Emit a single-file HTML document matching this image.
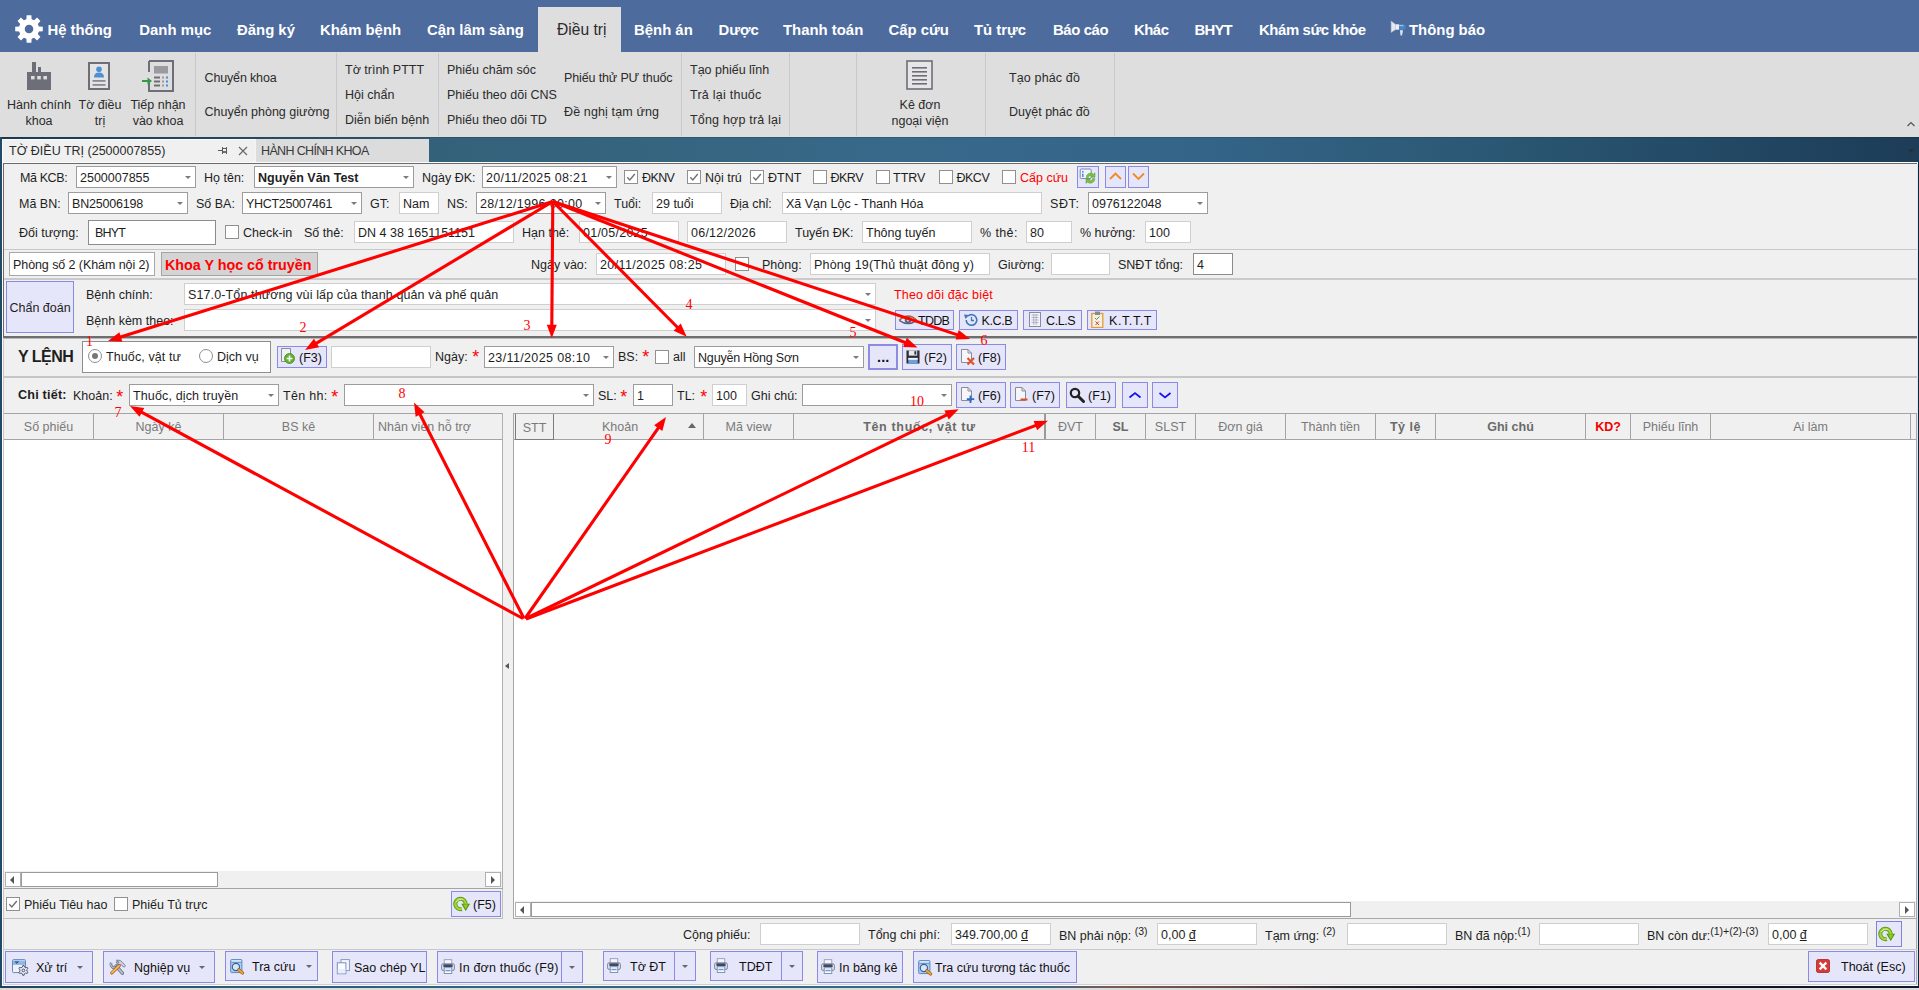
<!DOCTYPE html>
<html><head><meta charset="utf-8"><title>UI</title>
<style>
html,body{margin:0;padding:0;}
body{width:1919px;height:990px;overflow:hidden;position:relative;background:#f0f0f0;font-family:"Liberation Sans",sans-serif;}
.t{position:absolute;white-space:pre;line-height:20px;height:20px;}
.b{position:absolute;box-sizing:border-box;}
.s{font-size:10.5px;position:relative;top:-4.5px;}
</style></head><body>
<div class="b" style="left:0px;top:0px;width:1919px;height:52px;background:#4d6b9d;"></div>
<div class="b" style="left:0px;top:52px;width:1919px;height:85px;background:#dedede;"></div>
<div class="b" style="left:0px;top:137px;width:1919px;height:25px;background:linear-gradient(90deg,#1c3f59 0%,#2f5b74 20%,#34617a 22.4%,#366682 39%,#38698b 47%,#346488 62.5%,#2c5a76 75.5%,#234a66 88.6%,#1d3c57 100%);"></div>
<div class="b" style="left:0px;top:137px;width:1919px;height:1px;background:rgba(10,25,40,.18);"></div>
<div class="b" style="left:0px;top:138px;width:430px;height:1px;background:rgba(10,25,40,.1);"></div>
<div class="b" style="left:0px;top:137px;width:2px;height:853px;background:#214a68;"></div>
<div class="b" style="left:1918px;top:162px;width:1px;height:826px;background:#10263c;"></div>
<div class="b" style="left:0px;top:986px;width:1919px;height:2px;background:linear-gradient(90deg,#1f4260 0%,#28587a 10%,#2d6584 25%,#34698a 54%,#7a5a52 58%,#6a4a48 64%,#2a2230 70%,#0a0f1c 78%,#0e1a2c 100%);"></div>
<div class="b" style="left:0px;top:988px;width:1919px;height:2px;background:#dcdcdc;"></div>
<div class="b" style="left:538px;top:7px;width:83px;height:45px;background:#dedede;"></div>
<span class="t" style="left:47.4px;top:19.5px;font-size:14.9px;color:#fff;font-weight:700;">Hệ thống</span>
<span class="t" style="left:139.3px;top:19.5px;font-size:14.9px;color:#fff;font-weight:700;">Danh mục</span>
<span class="t" style="left:237px;top:19.5px;font-size:14.9px;color:#fff;font-weight:700;">Đăng ký</span>
<span class="t" style="left:320px;top:19.5px;font-size:14.9px;color:#fff;font-weight:700;">Khám bệnh</span>
<span class="t" style="left:427px;top:19.5px;font-size:14.9px;color:#fff;font-weight:700;">Cận lâm sàng</span>
<span class="t" style="left:634px;top:19.5px;font-size:14.9px;color:#fff;font-weight:700;">Bệnh án</span>
<span class="t" style="left:718.5px;top:19.5px;font-size:14.9px;color:#fff;font-weight:700;">Dược</span>
<span class="t" style="left:783px;top:19.5px;font-size:14.9px;color:#fff;font-weight:700;">Thanh toán</span>
<span class="t" style="left:888.5px;top:19.5px;font-size:14.9px;color:#fff;font-weight:700;">Cấp cứu</span>
<span class="t" style="left:974px;top:19.5px;font-size:14.9px;color:#fff;font-weight:700;">Tủ trực</span>
<span class="t" style="left:1053px;top:19.5px;font-size:14.9px;color:#fff;font-weight:700;letter-spacing:-0.4px;">Báo cáo</span>
<span class="t" style="left:1134px;top:19.5px;font-size:14.9px;color:#fff;font-weight:700;letter-spacing:-0.5px;">Khác</span>
<span class="t" style="left:1194.5px;top:19.5px;font-size:14.9px;color:#fff;font-weight:700;letter-spacing:-0.8px;">BHYT</span>
<span class="t" style="left:1259px;top:19.5px;font-size:14.9px;color:#fff;font-weight:700;letter-spacing:-0.4px;">Khám sức khỏe</span>
<span class="t" style="left:1409px;top:19.5px;font-size:14.9px;color:#fff;font-weight:700;">Thông báo</span>
<span class="t" style="left:557px;top:19.5px;font-size:15.6px;color:#2b2b2b;">Điều trị</span>
<svg class="b" style="left:13px;top:13px" width="32" height="32" viewBox="0 0 32 32"><path d="M25.86 13.38 L29.80 13.63 L29.80 18.37 L25.86 18.62 L24.82 21.12 L27.43 24.08 L24.08 27.43 L21.12 24.82 L18.62 25.86 L18.37 29.80 L13.63 29.80 L13.38 25.86 L10.88 24.82 L7.92 27.43 L4.57 24.08 L7.18 21.12 L6.14 18.62 L2.20 18.37 L2.20 13.63 L6.14 13.38 L7.18 10.88 L4.57 7.92 L7.92 4.57 L10.88 7.18 L13.38 6.14 L13.63 2.20 L18.37 2.20 L18.62 6.14 L21.12 7.18 L24.08 4.57 L27.43 7.92 L24.82 10.88 Z M20.30 16.00 A4.3 4.3 0 1 0 11.70 16.00 A4.3 4.3 0 1 0 20.30 16.00 Z" fill="#fff" fill-rule="evenodd"/></svg>
<svg class="b" style="left:1390px;top:20px" width="17" height="17" viewBox="0 0 17 17"><polygon points="1.1,1.1 5.6,4.4 5.6,9.6 1.1,12.6" fill="#e6e8f0" stroke="#aab4c8" stroke-width=".5"/><rect x="5.5" y="4.3" width="3.6" height="5.4" fill="#eceef4"/><path d="M9 4.2 H13 Q15.7 4.2 15.7 7 Q15.7 9.8 13 9.8 H9 Z" fill="#4a86c8"/><path d="M9.2 5.6 H13.4" stroke="#a8ccee" stroke-width="1"/><polygon points="9.9,10.2 13,10.2 12,15.5 10.6,15.5" fill="#e0e4ee"/></svg>
<div class="b" style="left:195px;top:53px;width:1px;height:83px;background:#c8c8c8;"></div>
<div class="b" style="left:336px;top:53px;width:1px;height:83px;background:#c8c8c8;"></div>
<div class="b" style="left:438px;top:53px;width:1px;height:83px;background:#c8c8c8;"></div>
<div class="b" style="left:681px;top:53px;width:1px;height:83px;background:#c8c8c8;"></div>
<div class="b" style="left:789px;top:53px;width:1px;height:83px;background:#c8c8c8;"></div>
<div class="b" style="left:856px;top:53px;width:1px;height:83px;background:#c8c8c8;"></div>
<div class="b" style="left:985px;top:53px;width:1px;height:83px;background:#c8c8c8;"></div>
<div class="b" style="left:1114px;top:53px;width:1px;height:83px;background:#c8c8c8;"></div>
<span class="t" style="left:-21px;top:94.5px;font-size:12.5px;color:#2b2b2b;width:120px;text-align:center;">Hành chính</span>
<span class="t" style="left:-21px;top:110.5px;font-size:12.5px;color:#2b2b2b;width:120px;text-align:center;">khoa</span>
<span class="t" style="left:40px;top:94.5px;font-size:12.5px;color:#2b2b2b;width:120px;text-align:center;">Tờ điều</span>
<span class="t" style="left:40px;top:110.5px;font-size:12.5px;color:#2b2b2b;width:120px;text-align:center;">trị</span>
<span class="t" style="left:98px;top:94.5px;font-size:12.5px;color:#2b2b2b;width:120px;text-align:center;">Tiếp nhận</span>
<span class="t" style="left:98px;top:110.5px;font-size:12.5px;color:#2b2b2b;width:120px;text-align:center;">vào khoa</span>
<span class="t" style="left:860px;top:94.5px;font-size:12.5px;color:#2b2b2b;width:120px;text-align:center;">Kê đơn</span>
<span class="t" style="left:860px;top:110.5px;font-size:12.5px;color:#2b2b2b;width:120px;text-align:center;">ngoại viện</span>
<span class="t" style="left:204.5px;top:67.5px;font-size:12.5px;color:#2b2b2b;letter-spacing:-0.15px;">Chuyển khoa</span>
<span class="t" style="left:204.5px;top:101.5px;font-size:12.5px;color:#2b2b2b;">Chuyển phòng giường</span>
<span class="t" style="left:345px;top:59.5px;font-size:12.5px;color:#2b2b2b;">Tờ trình PTTT</span>
<span class="t" style="left:345px;top:84.5px;font-size:12.5px;color:#2b2b2b;">Hội chẩn</span>
<span class="t" style="left:345px;top:109.5px;font-size:12.5px;color:#2b2b2b;">Diễn biến bệnh</span>
<span class="t" style="left:447px;top:59.5px;font-size:12.5px;color:#2b2b2b;">Phiếu chăm sóc</span>
<span class="t" style="left:447px;top:84.5px;font-size:12.5px;color:#2b2b2b;">Phiếu theo dõi CNS</span>
<span class="t" style="left:447px;top:109.5px;font-size:12.5px;color:#2b2b2b;">Phiếu theo dõi TD</span>
<span class="t" style="left:564px;top:67.5px;font-size:12.5px;color:#2b2b2b;letter-spacing:-0.13px;">Phiếu thử PƯ thuốc</span>
<span class="t" style="left:564px;top:101.5px;font-size:12.5px;color:#2b2b2b;letter-spacing:0.13px;">Đề nghị tạm ứng</span>
<span class="t" style="left:690px;top:59.5px;font-size:12.5px;color:#2b2b2b;">Tạo phiếu lĩnh</span>
<span class="t" style="left:690px;top:84.5px;font-size:12.5px;color:#2b2b2b;letter-spacing:0.25px;">Trả lại thuốc</span>
<span class="t" style="left:690px;top:109.5px;font-size:12.5px;color:#2b2b2b;letter-spacing:0.19px;">Tổng hợp trả lại</span>
<span class="t" style="left:1009px;top:67.5px;font-size:12.5px;color:#2b2b2b;letter-spacing:0.14px;">Tạo phác đồ</span>
<span class="t" style="left:1009px;top:101.5px;font-size:12.5px;color:#2b2b2b;">Duyệt phác đồ</span>
<svg class="b" style="left:27px;top:61px" width="25" height="30" viewBox="0 0 25 30"><path d="M0 11 H5 V1 H9 V11 H11 V6 H14 V11 H24 V29 H0 Z" fill="#6e6e78"/><rect x="4" y="15" width="3.6" height="3.4" fill="#dedede"/><rect x="10.2" y="15" width="3.6" height="3.4" fill="#dedede"/><rect x="16.4" y="15" width="3.6" height="3.4" fill="#dedede"/></svg>
<svg class="b" style="left:88px;top:62px" width="22" height="28" viewBox="0 0 22 28"><rect x="1" y="1" width="20" height="26" fill="#e4e4e4" stroke="#6e6e78" stroke-width="2"/><circle cx="11" cy="7.2" r="2.8" fill="#4f8fd6"/><path d="M6 15.5 Q6 10.5 11 10.5 Q16 10.5 16 15.5 Z" fill="#4f8fd6"/><rect x="4.5" y="18" width="13" height="1.8" fill="#8a8a92"/><rect x="4.5" y="22" width="13" height="1.8" fill="#8a8a92"/></svg>
<svg class="b" style="left:142px;top:60px" width="32" height="32" viewBox="0 0 32 32"><path d="M7 1 H31 V31 H7 V20 M7 12 V1" fill="none" stroke="#6e6e78" stroke-width="2"/><rect x="12" y="6" width="14" height="7.5" fill="#9a9aa0"/><rect x="12" y="16.5" width="6" height="2" fill="#6e6e78"/><rect x="12" y="20.5" width="6" height="2" fill="#6e6e78"/><rect x="12" y="24.5" width="6" height="2" fill="#6e6e78"/><rect x="20" y="16.5" width="2" height="2" fill="#9a9aa0"/><rect x="20" y="20.5" width="2" height="2" fill="#9a9aa0"/><rect x="20" y="24.5" width="2" height="2" fill="#9a9aa0"/><rect x="24" y="16.5" width="2" height="2" fill="#3f8fe0"/><rect x="24" y="20.5" width="2" height="2" fill="#3f8fe0"/><rect x="24" y="24.5" width="2" height="2" fill="#3f8fe0"/><path d="M0 20 H5.5 V17.5 L10 21 L5.5 24.5 V22 H0 Z" fill="#2e9b4a"/></svg>
<svg class="b" style="left:906px;top:60px" width="27" height="30" viewBox="0 0 27 30"><rect x="1" y="1" width="25" height="28" fill="#e6e6e6" stroke="#6e6e78" stroke-width="1.6"/><rect x="6" y="7" width="15" height="1.6" fill="#6e6e78"/><rect x="6" y="11" width="15" height="1.6" fill="#6e6e78"/><rect x="6" y="15" width="15" height="1.6" fill="#6e6e78"/><rect x="6" y="19" width="15" height="1.6" fill="#6e6e78"/><rect x="6" y="23" width="15" height="1.6" fill="#6e6e78"/></svg>
<svg class="b" style="left:1906px;top:120px" width="10" height="8" viewBox="0 0 10 8"><path d="M1.5 6 L5 2.5 L8.5 6" fill="none" stroke="#555" stroke-width="1.2"/></svg>
<div class="b" style="left:2px;top:139px;width:253px;height:24px;background:#f0f0f0;border-top:1px solid #fafafa;border-left:1px solid #fafafa;"></div>
<div class="b" style="left:255px;top:139px;width:174px;height:23px;background:#dcdcdc;border-left:1px solid #f4f4f4;"></div>
<span class="t" style="left:9px;top:141px;font-size:12.5px;color:#2b2b2b;">TỜ ĐIỀU TRỊ (2500007855)</span>
<span class="t" style="left:261px;top:141px;font-size:12.5px;color:#3a3a3a;letter-spacing:-0.65px;">HÀNH CHÍNH KHOA</span>
<svg class="b" style="left:217px;top:145px" width="12" height="12" viewBox="0 0 12 12"><path d="M1 5.5 H5.5 M5.5 2 V9 M5.5 3.5 H9.5 M9.5 2 V9" fill="none" stroke="#5a5a5a" stroke-width="1"/><path d="M5.5 7 H9.5" stroke="#5a5a5a" stroke-width="1.7"/></svg>
<svg class="b" style="left:237px;top:145px" width="12" height="12" viewBox="0 0 12 12"><path d="M2 2 L10 10 M10 2 L2 10" fill="none" stroke="#666" stroke-width="1.1"/></svg>
<div class="b" style="left:1908px;top:149px;width:0;height:0;border-left:3.5px solid transparent;border-right:3.5px solid transparent;border-top:4px solid #2a2f36;"></div>
<div class="b" style="left:2px;top:162px;width:1916px;height:824px;background:#f0f0f0;"></div>
<div class="b" style="left:2px;top:984px;width:1916px;height:1px;background:#d0d0d0;"></div>
<div class="b" style="left:2px;top:985px;width:1916px;height:1px;background:#fafafa;"></div>
<div class="b" style="left:1917px;top:164px;width:1px;height:821px;background:#e4e4e4;"></div>
<div class="b" style="left:2px;top:162px;width:1916px;height:1px;background:#fcfcfc;"></div>
<div class="b" style="left:3px;top:163px;width:1914px;height:1px;background:#6a6a6a;"></div>
<div class="b" style="left:3px;top:163px;width:1px;height:175px;background:#6a6a6a;"></div>
<div class="b" style="left:3px;top:338px;width:1px;height:646px;background:#c8c8c8;"></div>
<div class="b" style="left:2px;top:163px;width:1px;height:822px;background:#fcfcfc;"></div>
<span class="t" style="left:20px;top:167.6px;font-size:12.5px;color:#1e1e1e;letter-spacing:-0.4px;">Mã KCB:</span>
<div class="b" style="left:76px;top:166px;width:120px;height:22px;background:#fff;border:1px solid #9c9c9c;"></div>
<span class="t" style="left:80px;top:167.5px;font-size:12.5px;color:#1e1e1e;">2500007855</span>
<div class="b" style="left:184.5px;top:175.8px;width:0;height:0;border-left:3.5px solid transparent;border-right:3.5px solid transparent;border-top:3.6px solid #7a7a7a;"></div>
<span class="t" style="left:204px;top:167.6px;font-size:12.5px;color:#1e1e1e;">Họ tên:</span>
<div class="b" style="left:254px;top:166px;width:160px;height:22px;background:#fff;border:1px solid #9c9c9c;"></div>
<span class="t" style="left:258px;top:167.5px;font-size:12.5px;color:#1e1e1e;font-weight:700;">Nguyễn Văn Test</span>
<div class="b" style="left:402.5px;top:175.8px;width:0;height:0;border-left:3.5px solid transparent;border-right:3.5px solid transparent;border-top:3.6px solid #7a7a7a;"></div>
<span class="t" style="left:422px;top:167.6px;font-size:12.5px;color:#1e1e1e;">Ngày ĐK:</span>
<div class="b" style="left:482px;top:166px;width:135px;height:22px;background:#fff;border:1px solid #9c9c9c;"></div>
<span class="t" style="left:486px;top:167.5px;font-size:12.5px;color:#1e1e1e;letter-spacing:0.33px;">20/11/2025 08:21</span>
<div class="b" style="left:605.5px;top:175.8px;width:0;height:0;border-left:3.5px solid transparent;border-right:3.5px solid transparent;border-top:3.6px solid #7a7a7a;"></div>
<div class="b" style="left:624px;top:170px;width:14px;height:14px;background:#fff;border:1px solid #909090;"></div>
<svg class="b" style="left:624px;top:170px" width="14" height="14" viewBox="0 0 14 14"><path d="M3.3 7.3 L5.8 10 L10.8 4" fill="none" stroke="#707070" stroke-width="1.4"/></svg>
<span class="t" style="left:642px;top:167.6px;font-size:12.5px;color:#1e1e1e;letter-spacing:-0.6px;">ĐKNV</span>
<div class="b" style="left:687px;top:170px;width:14px;height:14px;background:#fff;border:1px solid #909090;"></div>
<svg class="b" style="left:687px;top:170px" width="14" height="14" viewBox="0 0 14 14"><path d="M3.3 7.3 L5.8 10 L10.8 4" fill="none" stroke="#707070" stroke-width="1.4"/></svg>
<span class="t" style="left:705px;top:167.6px;font-size:12.5px;color:#1e1e1e;">Nội trú</span>
<div class="b" style="left:750px;top:170px;width:14px;height:14px;background:#fff;border:1px solid #909090;"></div>
<svg class="b" style="left:750px;top:170px" width="14" height="14" viewBox="0 0 14 14"><path d="M3.3 7.3 L5.8 10 L10.8 4" fill="none" stroke="#707070" stroke-width="1.4"/></svg>
<span class="t" style="left:768px;top:167.6px;font-size:12.5px;color:#1e1e1e;">ĐTNT</span>
<div class="b" style="left:813px;top:170px;width:14px;height:14px;background:#fff;border:1px solid #909090;"></div>
<span class="t" style="left:830.5px;top:167.6px;font-size:12.5px;color:#1e1e1e;letter-spacing:-0.5px;">ĐKRV</span>
<div class="b" style="left:876px;top:170px;width:14px;height:14px;background:#fff;border:1px solid #909090;"></div>
<span class="t" style="left:893px;top:167.6px;font-size:12.5px;color:#1e1e1e;">TTRV</span>
<div class="b" style="left:939px;top:170px;width:14px;height:14px;background:#fff;border:1px solid #909090;"></div>
<span class="t" style="left:956.5px;top:167.6px;font-size:12.5px;color:#1e1e1e;letter-spacing:-0.5px;">ĐKCV</span>
<div class="b" style="left:1002px;top:170px;width:14px;height:14px;background:#fff;border:1px solid #909090;"></div>
<span class="t" style="left:1020px;top:167.6px;font-size:12.5px;color:#ff0000;">Cấp cứu</span>
<div class="b" style="left:1077px;top:166px;width:22px;height:22px;background:#e6e6fa;border:1px solid #8a8ae6;"></div>
<div class="b" style="left:1105px;top:166px;width:21px;height:22px;background:#e6e6fa;border:1px solid #8a8ae6;"></div>
<div class="b" style="left:1128px;top:166px;width:21px;height:22px;background:#e6e6fa;border:1px solid #8a8ae6;"></div>
<svg class="b" style="left:1079px;top:168px" width="19" height="18" viewBox="0 0 19 18"><rect x="1.2" y="1" width="11" height="9.5" rx="1" fill="#f2f5fb" stroke="#7a88b4" stroke-width="1"/><rect x="3" y="3" width="1.6" height="1.6" fill="#4a90e0"/><rect x="3" y="5.6" width="1.6" height="3.4" fill="#4a90e0"/><path d="M7.2 9.6 A4.4 4.4 0 0 1 14.6 6.2 L16 4.8 V9.2 H11.6 L12.9 7.9 A2.2 2.2 0 0 0 9.4 9.6 Z" fill="#7cc242" stroke="#4e9a28" stroke-width=".5"/><path d="M15.8 10.6 A4.4 4.4 0 0 1 8.4 14 L7 15.4 V11 H11.4 L10.1 12.3 A2.2 2.2 0 0 0 13.6 10.6 Z" fill="#7cc242" stroke="#4e9a28" stroke-width=".5"/></svg>
<svg class="b" style="left:1108px;top:170px" width="15" height="12" viewBox="0 0 15 12"><path d="M2 9 L7.5 3.5 L13 9" fill="none" stroke="#f08a24" stroke-width="1.8"/></svg>
<svg class="b" style="left:1131px;top:170px" width="15" height="12" viewBox="0 0 15 12"><path d="M2 3.5 L7.5 9 L13 3.5" fill="none" stroke="#f08a24" stroke-width="1.8"/></svg>
<span class="t" style="left:19px;top:193.6px;font-size:12.5px;color:#1e1e1e;">Mã BN:</span>
<div class="b" style="left:68px;top:192px;width:120px;height:22px;background:#fff;border:1px solid #9c9c9c;"></div>
<span class="t" style="left:72px;top:193.5px;font-size:12.5px;color:#1e1e1e;letter-spacing:-0.2px;">BN25006198</span>
<div class="b" style="left:176.5px;top:201.8px;width:0;height:0;border-left:3.5px solid transparent;border-right:3.5px solid transparent;border-top:3.6px solid #7a7a7a;"></div>
<span class="t" style="left:196px;top:193.6px;font-size:12.5px;color:#1e1e1e;">Số BA:</span>
<div class="b" style="left:242px;top:192px;width:120px;height:22px;background:#fff;border:1px solid #9c9c9c;"></div>
<span class="t" style="left:246px;top:193.5px;font-size:12.5px;color:#1e1e1e;letter-spacing:-0.3px;">YHCT25007461</span>
<div class="b" style="left:350.5px;top:201.8px;width:0;height:0;border-left:3.5px solid transparent;border-right:3.5px solid transparent;border-top:3.6px solid #7a7a7a;"></div>
<span class="t" style="left:370px;top:193.6px;font-size:12.5px;color:#1e1e1e;">GT:</span>
<div class="b" style="left:399px;top:192px;width:40px;height:22px;background:#fff;border:1px solid #cfcfcf;"></div>
<span class="t" style="left:403px;top:193.5px;font-size:12.5px;color:#1e1e1e;">Nam</span>
<span class="t" style="left:447px;top:193.6px;font-size:12.5px;color:#1e1e1e;">NS:</span>
<div class="b" style="left:476px;top:192px;width:130px;height:22px;background:#fff;border:1px solid #9c9c9c;"></div>
<span class="t" style="left:480px;top:193.5px;font-size:12.5px;color:#1e1e1e;letter-spacing:0.33px;">28/12/1996 00:00</span>
<div class="b" style="left:594.5px;top:201.8px;width:0;height:0;border-left:3.5px solid transparent;border-right:3.5px solid transparent;border-top:3.6px solid #7a7a7a;"></div>
<span class="t" style="left:614px;top:193.6px;font-size:12.5px;color:#1e1e1e;">Tuổi:</span>
<div class="b" style="left:652px;top:192px;width:70px;height:22px;background:#fff;border:1px solid #cfcfcf;"></div>
<span class="t" style="left:656px;top:193.5px;font-size:12.5px;color:#1e1e1e;">29 tuổi</span>
<span class="t" style="left:730px;top:193.6px;font-size:12.5px;color:#1e1e1e;">Địa chỉ:</span>
<div class="b" style="left:782px;top:192px;width:260px;height:22px;background:#fff;border:1px solid #cfcfcf;"></div>
<span class="t" style="left:786px;top:193.5px;font-size:12.5px;color:#1e1e1e;">Xã Vạn Lộc - Thanh Hóa</span>
<span class="t" style="left:1050px;top:193.6px;font-size:12.5px;color:#1e1e1e;letter-spacing:0.6px;">SĐT:</span>
<div class="b" style="left:1088px;top:192px;width:120px;height:22px;background:#fff;border:1px solid #9c9c9c;"></div>
<span class="t" style="left:1092px;top:193.5px;font-size:12.5px;color:#1e1e1e;">0976122048</span>
<div class="b" style="left:1196.5px;top:201.8px;width:0;height:0;border-left:3.5px solid transparent;border-right:3.5px solid transparent;border-top:3.6px solid #7a7a7a;"></div>
<span class="t" style="left:19px;top:222.6px;font-size:12.5px;color:#1e1e1e;">Đối tượng:</span>
<div class="b" style="left:88px;top:220px;width:128px;height:25px;background:#fff;border:1px solid #8c8c8c;"></div>
<span class="t" style="left:95px;top:223.0px;font-size:12.5px;color:#1e1e1e;letter-spacing:-0.8px;">BHYT</span>
<div class="b" style="left:225px;top:225px;width:14px;height:14px;background:#fff;border:1px solid #909090;"></div>
<span class="t" style="left:243px;top:222.6px;font-size:12.5px;color:#1e1e1e;">Check-in</span>
<span class="t" style="left:304px;top:222.6px;font-size:12.5px;color:#1e1e1e;">Số thẻ:</span>
<div class="b" style="left:354px;top:221px;width:160px;height:22px;background:#fff;border:1px solid #cfcfcf;"></div>
<span class="t" style="left:358px;top:222.5px;font-size:12.5px;color:#1e1e1e;">DN 4 38 1651151151</span>
<span class="t" style="left:522px;top:222.6px;font-size:12.5px;color:#1e1e1e;">Hạn thẻ:</span>
<div class="b" style="left:579px;top:221px;width:100px;height:22px;background:#fff;border:1px solid #cfcfcf;"></div>
<span class="t" style="left:583px;top:222.5px;font-size:12.5px;color:#1e1e1e;letter-spacing:0.24px;">01/05/2025</span>
<div class="b" style="left:687px;top:221px;width:100px;height:22px;background:#fff;border:1px solid #cfcfcf;"></div>
<span class="t" style="left:691px;top:222.5px;font-size:12.5px;color:#1e1e1e;letter-spacing:0.24px;">06/12/2026</span>
<span class="t" style="left:795px;top:222.6px;font-size:12.5px;color:#1e1e1e;">Tuyến ĐK:</span>
<div class="b" style="left:862px;top:221px;width:110px;height:22px;background:#fff;border:1px solid #cfcfcf;"></div>
<span class="t" style="left:866px;top:222.5px;font-size:12.5px;color:#1e1e1e;">Thông tuyến</span>
<span class="t" style="left:980px;top:222.6px;font-size:12.5px;color:#1e1e1e;letter-spacing:0.4px;">% thẻ:</span>
<div class="b" style="left:1026px;top:221px;width:46px;height:22px;background:#fff;border:1px solid #cfcfcf;"></div>
<span class="t" style="left:1030px;top:222.5px;font-size:12.5px;color:#1e1e1e;">80</span>
<span class="t" style="left:1080px;top:222.6px;font-size:12.5px;color:#1e1e1e;">% hưởng:</span>
<div class="b" style="left:1145px;top:221px;width:46px;height:22px;background:#fff;border:1px solid #cfcfcf;"></div>
<span class="t" style="left:1149px;top:222.5px;font-size:12.5px;color:#1e1e1e;">100</span>
<div class="b" style="left:4px;top:249px;width:1913px;height:1px;background:#c8c8c8;"></div>
<div class="b" style="left:9px;top:252px;width:146px;height:24px;background:#fff;border:1px solid #a8a8a8;"></div>
<span class="t" style="left:13px;top:254.5px;font-size:12.5px;color:#1e1e1e;letter-spacing:-0.08px;">Phòng số 2 (Khám nội 2)</span>
<div class="b" style="left:161px;top:252px;width:157px;height:24px;background:#d4d4d4;border:1px solid #a4a4a4;"></div>
<span class="t" style="left:165px;top:254.8px;font-size:14.3px;color:#ff0000;font-weight:700;">Khoa Y học cổ truyền</span>
<span class="t" style="left:531px;top:254.8px;font-size:12.5px;color:#1e1e1e;">Ngày vào:</span>
<div class="b" style="left:596px;top:253px;width:130px;height:22px;background:#fff;border:1px solid #cfcfcf;"></div>
<span class="t" style="left:600px;top:254.5px;font-size:12.5px;color:#1e1e1e;letter-spacing:0.37px;">20/11/2025 08:25</span>
<div class="b" style="left:735px;top:257px;width:14px;height:14px;background:#fff;border:1px solid #909090;"></div>
<span class="t" style="left:762px;top:254.8px;font-size:12.5px;color:#1e1e1e;">Phòng:</span>
<div class="b" style="left:810px;top:253px;width:180px;height:22px;background:#fff;border:1px solid #cfcfcf;"></div>
<span class="t" style="left:814px;top:254.5px;font-size:12.5px;color:#1e1e1e;letter-spacing:0.17px;">Phòng 19(Thủ thuật đông y)</span>
<span class="t" style="left:998px;top:254.8px;font-size:12.5px;color:#1e1e1e;">Giường:</span>
<div class="b" style="left:1051px;top:253px;width:59px;height:22px;background:#fff;border:1px solid #cfcfcf;"></div>
<span class="t" style="left:1118px;top:254.8px;font-size:12.5px;color:#1e1e1e;">SNĐT tổng:</span>
<div class="b" style="left:1193px;top:253px;width:40px;height:22px;background:#fff;border:1px solid #8c8c8c;"></div>
<span class="t" style="left:1197px;top:254.5px;font-size:12.5px;color:#1e1e1e;">4</span>
<div class="b" style="left:4px;top:278px;width:1913px;height:2px;background:#cacaca;"></div>
<div class="b" style="left:6px;top:281px;width:68px;height:52px;background:#e6e6fa;border:1px solid #8a8ae6;"></div>
<span class="t" style="left:9.5px;top:297.5px;font-size:12.5px;color:#1e1e1e;">Chẩn đoán</span>
<span class="t" style="left:86px;top:285px;font-size:12.5px;color:#1e1e1e;">Bệnh chính:</span>
<span class="t" style="left:86px;top:311px;font-size:12.5px;color:#1e1e1e;">Bệnh kèm theo:</span>
<div class="b" style="left:184px;top:283px;width:692px;height:22px;background:#fff;border:1px solid #cfcfcf;"></div>
<span class="t" style="left:188px;top:284.5px;font-size:12.5px;color:#1e1e1e;letter-spacing:0.12px;">S17.0-Tổn thương vùi lấp của thanh quản và phế quản</span>
<div class="b" style="left:865.0px;top:292.8px;width:0;height:0;border-left:3.5px solid transparent;border-right:3.5px solid transparent;border-top:3.6px solid #7a7a7a;"></div>
<div class="b" style="left:184px;top:309px;width:692px;height:22px;background:#fff;border:1px solid #cfcfcf;"></div>
<div class="b" style="left:865.0px;top:318.8px;width:0;height:0;border-left:3.5px solid transparent;border-right:3.5px solid transparent;border-top:3.6px solid #7a7a7a;"></div>
<span class="t" style="left:894px;top:284.5px;font-size:12.5px;color:#ff0000;letter-spacing:0.18px;">Theo dõi đặc biệt</span>
<div class="b" style="left:895px;top:310px;width:59px;height:20px;background:#e6e6fa;border:1px solid #8a8ae6;"></div>
<span class="t" style="left:918px;top:310.5px;font-size:12.5px;color:#111;letter-spacing:-0.7px;">TDDB</span>
<div class="b" style="left:959px;top:310px;width:59px;height:20px;background:#e6e6fa;border:1px solid #8a8ae6;"></div>
<span class="t" style="left:981.5px;top:310.5px;font-size:12.5px;color:#111;letter-spacing:-0.4px;">K.C.B</span>
<div class="b" style="left:1023px;top:310px;width:59px;height:20px;background:#e6e6fa;border:1px solid #8a8ae6;"></div>
<span class="t" style="left:1046px;top:310.5px;font-size:12.5px;color:#111;letter-spacing:-0.4px;">C.L.S</span>
<div class="b" style="left:1087px;top:310px;width:70px;height:20px;background:#e6e6fa;border:1px solid #8a8ae6;"></div>
<span class="t" style="left:1109px;top:310.5px;font-size:12.5px;color:#111;letter-spacing:0.6px;">K.T.T.T</span>
<svg class="b" style="left:898px;top:313px" width="20" height="14" viewBox="0 0 20 14"><path d="M1.2 7.4 Q10 -1.2 18.8 7.4 Q10 14.4 1.2 7.4 Z" fill="#eceef6"/><path d="M1.2 7.4 Q10 13.8 18.8 7.4" fill="none" stroke="#55648a" stroke-width="1.3"/><path d="M1.2 7.2 Q10 -1 18.8 7.2" fill="none" stroke="#a8683a" stroke-width="1.5"/><circle cx="10" cy="7" r="3.3" fill="#56627e"/><circle cx="10" cy="7" r="1.5" fill="#c4cada"/></svg>
<svg class="b" style="left:963px;top:312px" width="16" height="16" viewBox="0 0 16 16"><path d="M3.2 8 A5.3 5.3 0 1 0 5 4" fill="none" stroke="#3f78b8" stroke-width="1.6"/><path d="M1 2.5 L6 3 L2.6 7 Z" fill="#3f78b8"/><path d="M8.5 5 V8.5 H11" fill="none" stroke="#3f78b8" stroke-width="1.3"/></svg>
<svg class="b" style="left:1029px;top:312px" width="12" height="15" viewBox="0 0 12 15"><rect x=".5" y=".5" width="11" height="14" fill="#f2f2f8" stroke="#8a8a9a"/><path d="M2.5 3 H9.5 M2.5 5.5 H9.5 M2.5 8 H9.5 M2.5 10.5 H9.5 M4.8 2 V13 M7.2 2 V13" stroke="#a8a8c0" stroke-width=".8"/></svg>
<svg class="b" style="left:1091px;top:311px" width="13" height="17" viewBox="0 0 13 17"><rect x=".8" y="2.5" width="11" height="14" fill="#f6efe2" stroke="#e0a030" stroke-width="1.3"/><rect x="4" y=".5" width="5" height="3.5" fill="#8a8a8a"/><path d="M4 7 L5.5 8.5 L8.5 5.5" fill="none" stroke="#4a9a4a" stroke-width="1"/><path d="M4.5 10.5 L8 14 M8 10.5 L4.5 14" stroke="#d04040" stroke-width="1"/></svg>
<div class="b" style="left:4px;top:336px;width:1913px;height:2px;background:#6e6e6e;"></div>
<div class="b" style="left:4px;top:338px;width:1913px;height:1px;background:#b8b8b8;"></div>
<span class="t" style="left:18px;top:346.5px;font-size:16px;color:#1e1e1e;font-weight:700;letter-spacing:-0.5px;">Y LỆNH</span>
<div class="b" style="left:82px;top:341px;width:189px;height:32px;background:#fff;border:1px solid #8e8e8e;"></div>
<div class="b" style="left:88.2px;top:349.3px;width:14px;height:14px;border-radius:50%;border:1px solid #8e8e8e;background:#fff;"></div>
<div class="b" style="left:92.2px;top:353.3px;width:6px;height:6px;border-radius:50%;background:#777;"></div>
<span class="t" style="left:106px;top:347px;font-size:12.5px;color:#1e1e1e;letter-spacing:0.1px;">Thuốc, vật tư</span>
<div class="b" style="left:199px;top:349.3px;width:14px;height:14px;border-radius:50%;border:1px solid #8e8e8e;background:#fff;"></div>
<span class="t" style="left:217px;top:347px;font-size:12.5px;color:#1e1e1e;">Dịch vụ</span>
<div class="b" style="left:277px;top:346px;width:50px;height:22px;background:#e6e6fa;border:1px solid #8a8ae6;"></div>
<svg class="b" style="left:280px;top:348px" width="16" height="16" viewBox="0 0 16 16"><path d="M1.5 .5 H10.5 V13.5 H1.5 Z" fill="#f0f0f6" stroke="#8a8a98"/><circle cx="9.5" cy="10.5" r="5" fill="#63b32e" stroke="#3f8a1e" stroke-width=".8"/><path d="M9.5 7.6 V13.4 M6.6 10.5 H12.4" stroke="#fff" stroke-width="1.6"/></svg>
<span class="t" style="left:299px;top:347.5px;font-size:12.5px;color:#111;">(F3)</span>
<div class="b" style="left:331px;top:346px;width:100px;height:22px;background:#fff;border:1px solid #cfcfcf;"></div>
<span class="t" style="left:435px;top:347px;font-size:12.5px;color:#1e1e1e;">Ngày:</span>
<span class="t" style="left:472.2px;top:346.6px;font-size:18px;color:#ff0000;">*</span>
<div class="b" style="left:484px;top:346px;width:130px;height:22px;background:#fff;border:1px solid #9c9c9c;"></div>
<span class="t" style="left:488px;top:347.5px;font-size:12.5px;color:#1e1e1e;letter-spacing:0.37px;">23/11/2025 08:10</span>
<div class="b" style="left:602.5px;top:355.8px;width:0;height:0;border-left:3.5px solid transparent;border-right:3.5px solid transparent;border-top:3.6px solid #7a7a7a;"></div>
<span class="t" style="left:618px;top:347px;font-size:12.5px;color:#1e1e1e;">BS:</span>
<span class="t" style="left:642.2px;top:346.6px;font-size:18px;color:#ff0000;">*</span>
<div class="b" style="left:655px;top:350px;width:14px;height:14px;background:#fff;border:1px solid #909090;"></div>
<span class="t" style="left:673px;top:347px;font-size:12.5px;color:#1e1e1e;">all</span>
<div class="b" style="left:694px;top:346px;width:170px;height:22px;background:#fff;border:1px solid #9c9c9c;"></div>
<span class="t" style="left:698px;top:347.5px;font-size:12.5px;color:#1e1e1e;letter-spacing:-0.17px;">Nguyễn Hồng Sơn</span>
<div class="b" style="left:852.5px;top:355.8px;width:0;height:0;border-left:3.5px solid transparent;border-right:3.5px solid transparent;border-top:3.6px solid #7a7a7a;"></div>
<div class="b" style="left:868px;top:344px;width:30px;height:26px;background:#e6e6fa;border:2px solid #8c8ce4;"></div>
<span class="t" style="left:877px;top:346.5px;font-size:14.5px;color:#111;font-weight:700;letter-spacing:0.1px;">...</span>
<div class="b" style="left:902px;top:344px;width:50px;height:26px;background:#e6e6fa;border:1px solid #8a8ae6;"></div>
<div class="b" style="left:956px;top:344px;width:50px;height:26px;background:#e6e6fa;border:1px solid #8a8ae6;"></div>
<svg class="b" style="left:906px;top:350px" width="14" height="14" viewBox="0 0 15 15"><path d="M.5 .5 H14.5 V14.5 H.5 Z" fill="#2e2e36"/><rect x="3" y=".5" width="9" height="5.5" fill="#e8e8ee"/><rect x="9" y="1.3" width="2" height="3.6" fill="#2e2e36"/><rect x="2.5" y="8.5" width="10" height="6" fill="#6aa0e0"/><rect x="2.5" y="8.5" width="10" height="2" fill="#f4f4f8"/></svg>
<span class="t" style="left:924px;top:347.5px;font-size:12.5px;color:#111;">(F2)</span>
<svg class="b" style="left:960px;top:349px" width="16" height="17" viewBox="0 0 16 17"><path d="M1.5 .5 H8 L11.5 4 V13.5 H1.5 Z" fill="#f6f6fa" stroke="#8a8a98"/><path d="M8 .5 V4 H11.5" fill="none" stroke="#8a8a98"/><path d="M7.5 9 L14 15.5 M14 9 L7.5 15.5" stroke="#e0502a" stroke-width="2.2"/></svg>
<span class="t" style="left:978px;top:347.5px;font-size:12.5px;color:#111;">(F8)</span>
<div class="b" style="left:4px;top:376px;width:1913px;height:2px;background:#c6c6c6;"></div>
<span class="t" style="left:18px;top:385.0px;font-size:12.6px;color:#1e1e1e;font-weight:700;letter-spacing:0.2px;">Chi tiết:</span>
<span class="t" style="left:73px;top:385.5px;font-size:12.5px;color:#1e1e1e;">Khoản:</span>
<span class="t" style="left:116.2px;top:386.5px;font-size:18px;color:#ff0000;">*</span>
<div class="b" style="left:129px;top:384px;width:150px;height:22px;background:#fff;border:1px solid #9c9c9c;"></div>
<span class="t" style="left:133px;top:385.5px;font-size:12.5px;color:#1e1e1e;letter-spacing:0.14px;">Thuốc, dịch truyền</span>
<div class="b" style="left:267.5px;top:393.8px;width:0;height:0;border-left:3.5px solid transparent;border-right:3.5px solid transparent;border-top:3.6px solid #7a7a7a;"></div>
<span class="t" style="left:283px;top:385.5px;font-size:12.5px;color:#1e1e1e;letter-spacing:0.3px;">Tên hh:</span>
<span class="t" style="left:331.2px;top:386.5px;font-size:18px;color:#ff0000;">*</span>
<div class="b" style="left:344px;top:384px;width:250px;height:22px;background:#fff;border:1px solid #9c9c9c;"></div>
<div class="b" style="left:582.5px;top:393.8px;width:0;height:0;border-left:3.5px solid transparent;border-right:3.5px solid transparent;border-top:3.6px solid #7a7a7a;"></div>
<span class="t" style="left:598px;top:385.5px;font-size:12.5px;color:#1e1e1e;">SL:</span>
<span class="t" style="left:620.2px;top:386.5px;font-size:18px;color:#ff0000;">*</span>
<div class="b" style="left:633px;top:384px;width:40px;height:22px;background:#fff;border:1px solid #9c9c9c;"></div>
<span class="t" style="left:637px;top:385.5px;font-size:12.5px;color:#1e1e1e;">1</span>
<span class="t" style="left:677px;top:385.5px;font-size:12.5px;color:#1e1e1e;">TL:</span>
<span class="t" style="left:700.2px;top:386.5px;font-size:18px;color:#ff0000;">*</span>
<div class="b" style="left:712px;top:384px;width:35px;height:22px;background:#fff;border:1px solid #cfcfcf;"></div>
<span class="t" style="left:716px;top:385.5px;font-size:12.5px;color:#1e1e1e;">100</span>
<span class="t" style="left:751px;top:385.5px;font-size:12.5px;color:#1e1e1e;">Ghi chú:</span>
<div class="b" style="left:802px;top:384px;width:150px;height:22px;background:#fff;border:1px solid #9c9c9c;"></div>
<div class="b" style="left:940.5px;top:393.8px;width:0;height:0;border-left:3.5px solid transparent;border-right:3.5px solid transparent;border-top:3.6px solid #7a7a7a;"></div>
<div class="b" style="left:956px;top:382px;width:50px;height:26px;background:#e6e6fa;border:1px solid #8a8ae6;"></div>
<div class="b" style="left:1010px;top:382px;width:50px;height:26px;background:#e6e6fa;border:1px solid #8a8ae6;"></div>
<div class="b" style="left:1066px;top:382px;width:50px;height:26px;background:#e6e6fa;border:1px solid #8a8ae6;"></div>
<div class="b" style="left:1122px;top:382px;width:26px;height:26px;background:#e6e6fa;border:1px solid #8a8ae6;"></div>
<div class="b" style="left:1152px;top:382px;width:26px;height:26px;background:#e6e6fa;border:1px solid #8a8ae6;"></div>
<svg class="b" style="left:960px;top:387px" width="16" height="17" viewBox="0 0 16 17"><path d="M1.5 .5 H8 L11.5 4 V13.5 H1.5 Z" fill="#f6f6fa" stroke="#8a8a98"/><path d="M8 .5 V4 H11.5" fill="none" stroke="#8a8a98"/><path d="M10.5 8.5 V16 M6.8 12.2 H14.2" stroke="#2a6ac0" stroke-width="1.8"/></svg>
<span class="t" style="left:978px;top:385.5px;font-size:12.5px;color:#111;">(F6)</span>
<svg class="b" style="left:1014px;top:387px" width="16" height="17" viewBox="0 0 16 17"><path d="M1.5 .5 H8 L11.5 4 V13.5 H1.5 Z" fill="#f6f6fa" stroke="#8a8a98"/><path d="M8 .5 V4 H11.5" fill="none" stroke="#8a8a98"/><path d="M6.5 12.5 H13.5" stroke="#d8502a" stroke-width="2"/></svg>
<span class="t" style="left:1032px;top:385.5px;font-size:12.5px;color:#111;">(F7)</span>
<svg class="b" style="left:1069px;top:387px" width="16" height="16" viewBox="0 0 16 16"><circle cx="6" cy="6" r="4.2" fill="none" stroke="#222" stroke-width="2.2"/><path d="M9 9 L14.5 14.5" stroke="#222" stroke-width="3" stroke-linecap="round"/></svg>
<span class="t" style="left:1088px;top:385.5px;font-size:12.5px;color:#111;">(F1)</span>
<svg class="b" style="left:1127px;top:389px" width="16" height="12" viewBox="0 0 16 12"><path d="M2.5 8.5 L8 4 L13.5 8.5" fill="none" stroke="#1010f0" stroke-width="1.7"/></svg>
<svg class="b" style="left:1157px;top:389px" width="16" height="12" viewBox="0 0 16 12"><path d="M2.5 4 L8 8.5 L13.5 4" fill="none" stroke="#1010f0" stroke-width="1.7"/></svg>
<div class="b" style="left:4px;top:413px;width:499px;height:476px;background:#fff;"></div>
<div class="b" style="left:4px;top:413px;width:499px;height:27px;background:#f0f0f0;"></div>
<div class="b" style="left:4px;top:413px;width:499px;height:1px;background:#a4a4a4;"></div>
<div class="b" style="left:4px;top:439px;width:499px;height:1px;background:#a4a4a4;"></div>
<div class="b" style="left:502px;top:413px;width:1px;height:476px;background:#b0b0b0;"></div>
<div class="b" style="left:93px;top:414px;width:1px;height:25px;background:#a4a4a4;"></div>
<div class="b" style="left:223px;top:414px;width:1px;height:25px;background:#a4a4a4;"></div>
<div class="b" style="left:373px;top:414px;width:1px;height:25px;background:#a4a4a4;"></div>
<span class="t" style="left:4px;top:416.5px;font-size:12.5px;color:#7a7a7a;width:89px;text-align:center;">Số phiếu</span>
<span class="t" style="left:94px;top:416.5px;font-size:12.5px;color:#7a7a7a;width:129px;text-align:center;">Ngày kê</span>
<span class="t" style="left:224px;top:416.5px;font-size:12.5px;color:#7a7a7a;width:149px;text-align:center;">BS kê</span>
<span class="t" style="left:378px;top:416.5px;font-size:12.5px;color:#7a7a7a;">Nhân viên hỗ trợ</span>
<div class="b" style="left:4px;top:871px;width:498px;height:17px;background:#f0f0f0;"></div>
<div class="b" style="left:4px;top:888px;width:499px;height:1px;background:#a4a4a4;"></div>
<div class="b" style="left:5px;top:872px;width:16px;height:15px;background:#fff;border:1px solid #b0b0b0;"></div>
<div class="b" style="left:21px;top:872px;width:197px;height:15px;background:#fff;border:1px solid #9a9a9a;"></div>
<div class="b" style="left:485px;top:872px;width:16px;height:15px;background:#fff;border:1px solid #b0b0b0;"></div>
<div class="b" style="left:10px;top:875.5px;width:0;height:0;border-top:4px solid transparent;border-bottom:4px solid transparent;border-right:4.5px solid #555;"></div>
<div class="b" style="left:491px;top:875.5px;width:0;height:0;border-top:4px solid transparent;border-bottom:4px solid transparent;border-left:4.5px solid #555;"></div>
<div class="b" style="left:6px;top:897px;width:14px;height:14px;background:#fff;border:1px solid #909090;"></div>
<svg class="b" style="left:6px;top:897px" width="14" height="14" viewBox="0 0 14 14"><path d="M3.3 7.3 L5.8 10 L10.8 4" fill="none" stroke="#707070" stroke-width="1.4"/></svg>
<span class="t" style="left:24px;top:894.5px;font-size:12.5px;color:#1e1e1e;">Phiếu Tiêu hao</span>
<div class="b" style="left:114px;top:897px;width:14px;height:14px;background:#fff;border:1px solid #909090;"></div>
<span class="t" style="left:132px;top:894.5px;font-size:12.5px;color:#1e1e1e;">Phiếu Tủ trực</span>
<div class="b" style="left:451px;top:891px;width:50px;height:26px;background:#e6e6fa;border:1px solid #8a8ae6;"></div>
<span class="t" style="left:473px;top:894.5px;font-size:12.5px;color:#111;">(F5)</span>
<svg class="b" style="left:453.3px;top:896.2px" width="18" height="17" viewBox="0 0 18 17"><path d="M8.85 13 A5.2 5.2 0 1 1 12.7 8" fill="none" stroke="#5c9c16" stroke-width="4"/><polygon points="8.3,7.8 17.1,7.8 12.7,15" fill="#4e9012"/><path d="M8.85 13 A5.2 5.2 0 1 1 12.7 8.4" fill="none" stroke="#a2d636" stroke-width="2.2"/><polygon points="10,8.6 15.4,8.6 12.7,13.2" fill="#8ccc22"/><path d="M3.4 6 A4.9 4.9 0 0 1 10 3.6" fill="none" stroke="#dcf2a8" stroke-width="1"/></svg>
<div class="b" style="left:4px;top:918px;width:499px;height:1px;background:#c0c0c0;"></div>
<div class="b" style="left:502px;top:889px;width:1px;height:30px;background:#c0c0c0;"></div>
<div class="b" style="left:505px;top:662.5px;width:0;height:0;border-top:3.5px solid transparent;border-bottom:3.5px solid transparent;border-right:4px solid #555;"></div>
<div class="b" style="left:513px;top:413px;width:1404px;height:506px;background:#fff;"></div>
<div class="b" style="left:514px;top:413px;width:1403px;height:27px;background:#f0f0f0;"></div>
<div class="b" style="left:514px;top:413px;width:1403px;height:1px;background:#a4a4a4;"></div>
<div class="b" style="left:514px;top:439px;width:1403px;height:1px;background:#a4a4a4;"></div>
<div class="b" style="left:513px;top:413px;width:1px;height:506px;background:#a8a8a8;"></div>
<div class="b" style="left:1916px;top:413px;width:1px;height:571px;background:#a8a8a8;"></div>
<div class="b" style="left:553px;top:414px;width:1px;height:25px;background:#a4a4a4;"></div>
<div class="b" style="left:703px;top:414px;width:1px;height:25px;background:#a4a4a4;"></div>
<div class="b" style="left:793px;top:414px;width:1px;height:25px;background:#a4a4a4;"></div>
<div class="b" style="left:1045px;top:414px;width:1px;height:25px;background:#a4a4a4;"></div>
<div class="b" style="left:1095px;top:414px;width:1px;height:25px;background:#a4a4a4;"></div>
<div class="b" style="left:1145px;top:414px;width:1px;height:25px;background:#a4a4a4;"></div>
<div class="b" style="left:1195px;top:414px;width:1px;height:25px;background:#a4a4a4;"></div>
<div class="b" style="left:1285px;top:414px;width:1px;height:25px;background:#a4a4a4;"></div>
<div class="b" style="left:1375px;top:414px;width:1px;height:25px;background:#a4a4a4;"></div>
<div class="b" style="left:1435px;top:414px;width:1px;height:25px;background:#a4a4a4;"></div>
<div class="b" style="left:1585px;top:414px;width:1px;height:25px;background:#a4a4a4;"></div>
<div class="b" style="left:1630px;top:414px;width:1px;height:25px;background:#a4a4a4;"></div>
<div class="b" style="left:1710px;top:414px;width:1px;height:25px;background:#a4a4a4;"></div>
<div class="b" style="left:1910px;top:414px;width:1px;height:25px;background:#a4a4a4;"></div>
<div class="b" style="left:1044px;top:414px;width:2px;height:25px;background:#9a9a9a;"></div>
<div class="b" style="left:515px;top:414px;width:1px;height:26px;background:#7c7c7c;"></div>
<div class="b" style="left:553px;top:414px;width:1px;height:26px;background:#7c7c7c;"></div>
<div class="b" style="left:515px;top:439px;width:39px;height:1px;background:#7c7c7c;"></div>
<span class="t" style="left:516px;top:418px;font-size:12.5px;color:#7a7a7a;width:37px;text-align:center;">STT</span>
<span class="t" style="left:602px;top:416.5px;font-size:12.5px;color:#7a7a7a;">Khoản</span>
<span class="t" style="left:704px;top:416.5px;font-size:12.5px;color:#7a7a7a;width:89px;text-align:center;">Mã view</span>
<span class="t" style="left:794px;top:416.5px;font-size:12.5px;color:#6a6a6a;font-weight:700;width:251px;text-align:center;letter-spacing:0.66px;">Tên thuốc, vật tư</span>
<span class="t" style="left:1046px;top:416.5px;font-size:12.5px;color:#7a7a7a;width:49px;text-align:center;">ĐVT</span>
<span class="t" style="left:1096px;top:416.5px;font-size:12.5px;color:#6a6a6a;font-weight:700;width:49px;text-align:center;">SL</span>
<span class="t" style="left:1146px;top:416.5px;font-size:12.5px;color:#7a7a7a;width:49px;text-align:center;">SLST</span>
<span class="t" style="left:1196px;top:416.5px;font-size:12.5px;color:#7a7a7a;width:89px;text-align:center;">Đơn giá</span>
<span class="t" style="left:1286px;top:416.5px;font-size:12.5px;color:#7a7a7a;width:89px;text-align:center;">Thành tiền</span>
<span class="t" style="left:1376px;top:416.5px;font-size:12.5px;color:#6a6a6a;font-weight:700;width:59px;text-align:center;letter-spacing:0.55px;">Tỷ lệ</span>
<span class="t" style="left:1436px;top:416.5px;font-size:12.5px;color:#6a6a6a;font-weight:700;width:149px;text-align:center;">Ghi chú</span>
<span class="t" style="left:1586px;top:416.5px;font-size:12.5px;color:#f00000;font-weight:700;width:44px;text-align:center;">KD?</span>
<span class="t" style="left:1631px;top:416.5px;font-size:12.5px;color:#7a7a7a;width:79px;text-align:center;">Phiếu lĩnh</span>
<span class="t" style="left:1711px;top:416.5px;font-size:12.5px;color:#7a7a7a;width:199px;text-align:center;">Ai làm</span>
<div class="b" style="left:687.5px;top:423px;width:0;height:0;border-left:4.5px solid transparent;border-right:4.5px solid transparent;border-bottom:5.5px solid #666;"></div>
<div class="b" style="left:515px;top:901px;width:1401px;height:17px;background:#f0f0f0;"></div>
<div class="b" style="left:513px;top:918px;width:1404px;height:1px;background:#a8a8a8;"></div>
<div class="b" style="left:515px;top:902px;width:16px;height:15px;background:#fff;border:1px solid #b0b0b0;"></div>
<div class="b" style="left:531px;top:902px;width:820px;height:15px;background:#fff;border:1px solid #9a9a9a;"></div>
<div class="b" style="left:1899px;top:902px;width:16px;height:15px;background:#fff;border:1px solid #b0b0b0;"></div>
<div class="b" style="left:520px;top:905.5px;width:0;height:0;border-top:4px solid transparent;border-bottom:4px solid transparent;border-right:4.5px solid #555;"></div>
<div class="b" style="left:1905px;top:905.5px;width:0;height:0;border-top:4px solid transparent;border-bottom:4px solid transparent;border-left:4.5px solid #555;"></div>
<span class="t" style="left:683px;top:924.5px;font-size:12.5px;color:#1e1e1e;">Cộng phiếu:</span>
<div class="b" style="left:760px;top:923px;width:100px;height:22px;background:#fff;border:1px solid #cfcfcf;"></div>
<span class="t" style="left:868px;top:924.5px;font-size:12.5px;color:#1e1e1e;">Tổng chi phí:</span>
<div class="b" style="left:951px;top:923px;width:100px;height:22px;background:#fff;border:1px solid #cfcfcf;"></div>
<span class="t" style="left:955px;top:924.5px;font-size:12.5px;color:#1e1e1e;">349.700,00 <u>đ</u></span>
<span class="t" style="left:1059px;top:925.5px;font-size:12.5px;color:#1e1e1e;">BN phải nộp: <span class="s">(3)</span></span>
<div class="b" style="left:1157px;top:923px;width:100px;height:22px;background:#fff;border:1px solid #cfcfcf;"></div>
<span class="t" style="left:1161px;top:924.5px;font-size:12.5px;color:#1e1e1e;">0,00 <u>đ</u></span>
<span class="t" style="left:1265px;top:925.5px;font-size:12.5px;color:#1e1e1e;">Tạm ứng: <span class="s">(2)</span></span>
<div class="b" style="left:1347px;top:923px;width:100px;height:22px;background:#fff;border:1px solid #cfcfcf;"></div>
<span class="t" style="left:1455px;top:925.5px;font-size:12.5px;color:#1e1e1e;">BN đã nộp:<span class="s">(1)</span></span>
<div class="b" style="left:1539px;top:923px;width:100px;height:22px;background:#fff;border:1px solid #cfcfcf;"></div>
<span class="t" style="left:1647px;top:925.5px;font-size:12.5px;color:#1e1e1e;">BN còn dư:<span class="s">(1)+(2)-(3)</span></span>
<div class="b" style="left:1768px;top:923px;width:100px;height:22px;background:#fff;border:1px solid #cfcfcf;"></div>
<span class="t" style="left:1772px;top:924.5px;font-size:12.5px;color:#1e1e1e;">0,00 <u>đ</u></span>
<div class="b" style="left:1876px;top:921px;width:26px;height:26px;background:#e6e6fa;border:1px solid #8080e8;"></div>
<svg class="b" style="left:1878.4px;top:926.1px" width="18" height="17" viewBox="0 0 18 17"><path d="M8.85 13 A5.2 5.2 0 1 1 12.7 8" fill="none" stroke="#5c9c16" stroke-width="4"/><polygon points="8.3,7.8 17.1,7.8 12.7,15" fill="#4e9012"/><path d="M8.85 13 A5.2 5.2 0 1 1 12.7 8.4" fill="none" stroke="#a2d636" stroke-width="2.2"/><polygon points="10,8.6 15.4,8.6 12.7,13.2" fill="#8ccc22"/><path d="M3.4 6 A4.9 4.9 0 0 1 10 3.6" fill="none" stroke="#dcf2a8" stroke-width="1"/></svg>
<div class="b" style="left:4px;top:949px;width:1913px;height:1px;background:#c8c8c8;"></div>
<div class="b" style="left:5px;top:951px;width:88px;height:32px;background:#e6e6fa;border:1px solid #8a8ae6;"></div>
<span class="t" style="left:36px;top:957.5px;font-size:12.5px;color:#111;">Xử trí</span>
<div class="b" style="left:76.5px;top:966.3px;width:0;height:0;border-left:3.5px solid transparent;border-right:3.5px solid transparent;border-top:3.6px solid #666;"></div>
<div class="b" style="left:103px;top:951px;width:112px;height:32px;background:#e6e6fa;border:1px solid #8a8ae6;"></div>
<span class="t" style="left:134px;top:957.5px;font-size:12.5px;color:#111;">Nghiệp vụ</span>
<div class="b" style="left:198.5px;top:966.3px;width:0;height:0;border-left:3.5px solid transparent;border-right:3.5px solid transparent;border-top:3.6px solid #666;"></div>
<div class="b" style="left:225px;top:951px;width:93px;height:30px;background:#e6e6fa;border:1px solid #8a8ae6;"></div>
<span class="t" style="left:252px;top:956.5px;font-size:12.5px;color:#111;">Tra cứu</span>
<div class="b" style="left:305.5px;top:965.3px;width:0;height:0;border-left:3.5px solid transparent;border-right:3.5px solid transparent;border-top:3.6px solid #666;"></div>
<div class="b" style="left:332px;top:951px;width:95px;height:32px;background:#e6e6fa;border:1px solid #8a8ae6;"></div>
<span class="t" style="left:354px;top:957.5px;font-size:12.5px;color:#111;">Sao chép YL</span>
<div class="b" style="left:437px;top:951px;width:146px;height:32px;background:#e6e6fa;border:1px solid #8a8ae6;"></div>
<span class="t" style="left:459px;top:957.5px;font-size:12.5px;color:#111;letter-spacing:0.18px;">In đơn thuốc (F9)</span>
<div class="b" style="left:561px;top:952px;width:1px;height:30px;background:#8a8ae6;"></div>
<div class="b" style="left:568.5px;top:966.3px;width:0;height:0;border-left:3.5px solid transparent;border-right:3.5px solid transparent;border-top:3.6px solid #666;"></div>
<div class="b" style="left:603px;top:951px;width:93px;height:30px;background:#e6e6fa;border:1px solid #8a8ae6;"></div>
<span class="t" style="left:630px;top:956.5px;font-size:12.5px;color:#111;">Tờ ĐT</span>
<div class="b" style="left:674px;top:952px;width:1px;height:28px;background:#8a8ae6;"></div>
<div class="b" style="left:681.5px;top:965.3px;width:0;height:0;border-left:3.5px solid transparent;border-right:3.5px solid transparent;border-top:3.6px solid #666;"></div>
<div class="b" style="left:710px;top:951px;width:93px;height:30px;background:#e6e6fa;border:1px solid #8a8ae6;"></div>
<span class="t" style="left:739px;top:956.5px;font-size:12.5px;color:#111;">TDĐT</span>
<div class="b" style="left:781px;top:952px;width:1px;height:28px;background:#8a8ae6;"></div>
<div class="b" style="left:788.5px;top:965.3px;width:0;height:0;border-left:3.5px solid transparent;border-right:3.5px solid transparent;border-top:3.6px solid #666;"></div>
<div class="b" style="left:817px;top:951px;width:86px;height:32px;background:#e6e6fa;border:1px solid #8a8ae6;"></div>
<span class="t" style="left:839px;top:957.5px;font-size:12.5px;color:#111;">In bảng kê</span>
<div class="b" style="left:913px;top:951px;width:164px;height:32px;background:#e6e6fa;border:1px solid #8a8ae6;"></div>
<span class="t" style="left:935px;top:957.5px;font-size:12.5px;color:#111;">Tra cứu tương tác thuốc</span>
<div class="b" style="left:1808px;top:951px;width:107px;height:31px;background:#e6e6fa;border:1px solid #8a8ae6;"></div>
<span class="t" style="left:1841px;top:957.0px;font-size:12.5px;color:#111;">Thoát (Esc)</span>
<svg class="b" style="left:441px;top:959px" width="15" height="16" viewBox="0 0 15 16"><rect x="3.2" y=".7" width="7.6" height="5" fill="#f4f6fb" stroke="#8a92b0" stroke-width=".8"/><rect x=".6" y="4.8" width="12.8" height="6.6" rx="1.5" fill="#dfe4ee" stroke="#6e7a98" stroke-width=".9"/><rect x="2.4" y="5.3" width="9.2" height="2.8" fill="#3e4866"/><rect x="3.2" y="8.8" width="7.6" height="5.6" fill="#fafbfe" stroke="#6e7a98" stroke-width=".8"/><rect x="4.4" y="10.8" width="5.2" height="1.5" fill="#5aa4e4"/></svg>
<svg class="b" style="left:607px;top:958px" width="15" height="16" viewBox="0 0 15 16"><rect x="3.2" y=".7" width="7.6" height="5" fill="#f4f6fb" stroke="#8a92b0" stroke-width=".8"/><rect x=".6" y="4.8" width="12.8" height="6.6" rx="1.5" fill="#dfe4ee" stroke="#6e7a98" stroke-width=".9"/><rect x="2.4" y="5.3" width="9.2" height="2.8" fill="#3e4866"/><rect x="3.2" y="8.8" width="7.6" height="5.6" fill="#fafbfe" stroke="#6e7a98" stroke-width=".8"/><rect x="4.4" y="10.8" width="5.2" height="1.5" fill="#5aa4e4"/></svg>
<svg class="b" style="left:714px;top:958px" width="15" height="16" viewBox="0 0 15 16"><rect x="3.2" y=".7" width="7.6" height="5" fill="#f4f6fb" stroke="#8a92b0" stroke-width=".8"/><rect x=".6" y="4.8" width="12.8" height="6.6" rx="1.5" fill="#dfe4ee" stroke="#6e7a98" stroke-width=".9"/><rect x="2.4" y="5.3" width="9.2" height="2.8" fill="#3e4866"/><rect x="3.2" y="8.8" width="7.6" height="5.6" fill="#fafbfe" stroke="#6e7a98" stroke-width=".8"/><rect x="4.4" y="10.8" width="5.2" height="1.5" fill="#5aa4e4"/></svg>
<svg class="b" style="left:821px;top:959px" width="15" height="16" viewBox="0 0 15 16"><rect x="3.2" y=".7" width="7.6" height="5" fill="#f4f6fb" stroke="#8a92b0" stroke-width=".8"/><rect x=".6" y="4.8" width="12.8" height="6.6" rx="1.5" fill="#dfe4ee" stroke="#6e7a98" stroke-width=".9"/><rect x="2.4" y="5.3" width="9.2" height="2.8" fill="#3e4866"/><rect x="3.2" y="8.8" width="7.6" height="5.6" fill="#fafbfe" stroke="#6e7a98" stroke-width=".8"/><rect x="4.4" y="10.8" width="5.2" height="1.5" fill="#5aa4e4"/></svg>
<svg class="b" style="left:228.5px;top:957.5px" width="19" height="18" viewBox="0 0 19 18"><rect x="1.7" y="1.6" width="11.2" height="13" rx=".8" fill="#a9cdee" stroke="#5b88c2" stroke-width="1"/><rect x="2.6" y="2.4" width="9.4" height="1.1" fill="#f4f9fe"/><rect x="2.2" y="3.9" width="10.2" height=".8" fill="#5b88c2"/><circle cx="6.9" cy="9" r="3.6" fill="#d3e8fb" stroke="#3c5c94" stroke-width="1.1"/><path d="M9.8 11.8 L13.6 15" stroke="#a8641c" stroke-width="3.2" stroke-linecap="round"/><path d="M9.9 11.9 L13.5 14.9" stroke="#f0ac40" stroke-width="1.8" stroke-linecap="round"/></svg>
<svg class="b" style="left:916.5px;top:958.5px" width="19" height="18" viewBox="0 0 19 18"><rect x="1.7" y="1.6" width="11.2" height="13" rx=".8" fill="#a9cdee" stroke="#5b88c2" stroke-width="1"/><rect x="2.6" y="2.4" width="9.4" height="1.1" fill="#f4f9fe"/><rect x="2.2" y="3.9" width="10.2" height=".8" fill="#5b88c2"/><circle cx="6.9" cy="9" r="3.6" fill="#d3e8fb" stroke="#3c5c94" stroke-width="1.1"/><path d="M9.8 11.8 L13.6 15" stroke="#a8641c" stroke-width="3.2" stroke-linecap="round"/><path d="M9.9 11.9 L13.5 14.9" stroke="#f0ac40" stroke-width="1.8" stroke-linecap="round"/></svg>
<svg class="b" style="left:11px;top:958px" width="19" height="19" viewBox="0 0 19 19"><rect x="1.5" y="1.6" width="13" height="13" rx="1" fill="#fbfcfe" stroke="#6c88ba" stroke-width="1"/><rect x="2" y="2.1" width="12" height="4.8" fill="#8cb6e6"/><rect x="2" y="2.1" width="12" height="1.2" fill="#b4d0f0"/><polygon points="3.2,3.3 8.4,3.3 5.8,6.1" fill="#3a5c9a"/><rect x="2" y="7" width="12" height="7" fill="#eef2f8"/><path d="M11.37 9.06 L11.72 7.55 L13.08 7.55 L13.43 9.06 L14.78 9.83 L16.26 9.38 L16.94 10.57 L15.81 11.62 L15.81 13.18 L16.94 14.23 L16.26 15.42 L14.78 14.97 L13.43 15.74 L13.08 17.25 L11.72 17.25 L11.37 15.74 L10.02 14.97 L8.54 15.42 L7.86 14.23 L8.99 13.18 L8.99 11.62 L7.86 10.57 L8.54 9.38 L10.02 9.83 Z" fill="#eef0f6" stroke="#3c4a6e" stroke-width=".9"/><circle cx="12.4" cy="12.4" r="1.4" fill="#dfe4f0" stroke="#3c4a6e" stroke-width=".9"/></svg>
<svg class="b" style="left:109px;top:958px" width="19" height="18" viewBox="0 0 19 18"><path d="M13.4 15.2 L7 8" stroke="#5e6a84" stroke-width="3.4" stroke-linecap="round"/><path d="M13.4 15.2 L7 8" stroke="#b4bece" stroke-width="2" stroke-linecap="round"/><path d="M2.2 4.8 A3.6 3.6 0 1 0 7.4 3.2" fill="none" stroke="#5e6a84" stroke-width="2.6"/><path d="M2.2 4.8 A3.6 3.6 0 1 0 7.4 3.2" fill="none" stroke="#b4bece" stroke-width="1.3"/><path d="M7.5 2.2 Q11.6 1.4 13.6 4.4 L16.3 7.5 A1.4 1.4 0 0 1 14.4 9 L12 6.3 L10.5 7.6 L8.7 5.5 L10 4.3 Q9 3 7.5 2.2 Z" fill="#ccd4e0" stroke="#66748e" stroke-width=".8"/><path d="M2.8 14.8 L10.2 7.8" stroke="#b4581c" stroke-width="3.2" stroke-linecap="round"/><path d="M2.9 14.7 L10.1 7.9" stroke="#f6c458" stroke-width="1.7" stroke-linecap="round"/></svg>
<svg class="b" style="left:336px;top:958px" width="15" height="18" viewBox="0 0 15 18"><rect x="5" y="1.6" width="8.4" height="11" fill="#f3f6fc" stroke="#8290bc" stroke-width=".9"/><rect x="1.3" y="4.8" width="8.6" height="11" fill="#fbfcff" stroke="#7584b4" stroke-width=".9"/><rect x="1.8" y="11" width="7.6" height="4.3" fill="#e8eefa"/></svg>
<svg class="b" style="left:1816px;top:959px" width="14" height="14" viewBox="0 0 16 16"><rect x=".6" y=".6" width="14.8" height="14.8" rx="2" fill="#d83a3a" stroke="#a82020" stroke-width=".9"/><path d="M4.2 4.2 L11.8 11.8 M11.8 4.2 L4.2 11.8" stroke="#fff" stroke-width="2.6"/></svg>
<svg class="b" style="left:0;top:0;pointer-events:none" width="1919" height="990" viewBox="0 0 1919 990"><line x1="552.8" y1="201.5" x2="118.97" y2="337.56" stroke="#ff0000" stroke-width="3.1"/><polygon points="108.00,341.00 119.39,332.19 122.38,341.73" fill="#ff0000"/><line x1="552.8" y1="201.5" x2="314.86" y2="344.09" stroke="#ff0000" stroke-width="3.1"/><polygon points="305.00,350.00 314.01,338.77 319.15,347.35" fill="#ff0000"/><line x1="552.8" y1="201.5" x2="551.79" y2="326.80" stroke="#ff0000" stroke-width="3.1"/><polygon points="551.70,338.30 546.81,324.76 556.81,324.84" fill="#ff0000"/><line x1="552.8" y1="201.5" x2="678.61" y2="328.53" stroke="#ff0000" stroke-width="3.1"/><polygon points="686.70,336.70 673.65,330.63 680.75,323.59" fill="#ff0000"/><line x1="552.8" y1="201.5" x2="906.82" y2="343.23" stroke="#ff0000" stroke-width="3.1"/><polygon points="917.50,347.50 903.11,347.12 906.83,337.84" fill="#ff0000"/><line x1="552.8" y1="201.5" x2="959.08" y2="335.40" stroke="#ff0000" stroke-width="3.1"/><polygon points="970.00,339.00 955.61,339.52 958.74,330.03" fill="#ff0000"/><line x1="523" y1="618.5" x2="140.12" y2="411.47" stroke="#ff0000" stroke-width="3.1"/><polygon points="130.00,406.00 144.25,408.02 139.50,416.82" fill="#ff0000"/><line x1="524" y1="618.5" x2="419.22" y2="412.75" stroke="#ff0000" stroke-width="3.1"/><polygon points="414.00,402.50 424.58,412.26 415.67,416.80" fill="#ff0000"/><line x1="525" y1="618.5" x2="659.41" y2="426.42" stroke="#ff0000" stroke-width="3.1"/><polygon points="666.00,417.00 662.36,430.93 654.16,425.19" fill="#ff0000"/><line x1="526" y1="618.5" x2="948.35" y2="414.21" stroke="#ff0000" stroke-width="3.1"/><polygon points="958.70,409.20 948.72,419.58 944.37,410.58" fill="#ff0000"/><line x1="526" y1="619" x2="1037.25" y2="424.88" stroke="#ff0000" stroke-width="3.1"/><polygon points="1048.00,420.80 1037.15,430.27 1033.60,420.92" fill="#ff0000"/></svg>
<span class="t" style="left:74.5px;top:331.7px;width:30px;text-align:center;font-family:'Liberation Serif',serif;font-size:14px;color:#ff0000;">1</span>
<span class="t" style="left:288px;top:317.7px;width:30px;text-align:center;font-family:'Liberation Serif',serif;font-size:14px;color:#ff0000;">2</span>
<span class="t" style="left:512px;top:315.7px;width:30px;text-align:center;font-family:'Liberation Serif',serif;font-size:14px;color:#ff0000;">3</span>
<span class="t" style="left:674px;top:294.7px;width:30px;text-align:center;font-family:'Liberation Serif',serif;font-size:14px;color:#ff0000;">4</span>
<span class="t" style="left:838px;top:323.2px;width:30px;text-align:center;font-family:'Liberation Serif',serif;font-size:14px;color:#ff0000;">5</span>
<span class="t" style="left:969px;top:330.7px;width:30px;text-align:center;font-family:'Liberation Serif',serif;font-size:14px;color:#ff0000;">6</span>
<span class="t" style="left:103px;top:402.7px;width:30px;text-align:center;font-family:'Liberation Serif',serif;font-size:14px;color:#ff0000;">7</span>
<span class="t" style="left:387px;top:383.7px;width:30px;text-align:center;font-family:'Liberation Serif',serif;font-size:14px;color:#ff0000;">8</span>
<span class="t" style="left:593px;top:430.2px;width:30px;text-align:center;font-family:'Liberation Serif',serif;font-size:14px;color:#ff0000;">9</span>
<span class="t" style="left:902px;top:391.7px;width:30px;text-align:center;font-family:'Liberation Serif',serif;font-size:14px;color:#ff0000;">10</span>
<span class="t" style="left:1013.5px;top:437.7px;width:30px;text-align:center;font-family:'Liberation Serif',serif;font-size:14px;color:#ff0000;">11</span>
</body></html>
